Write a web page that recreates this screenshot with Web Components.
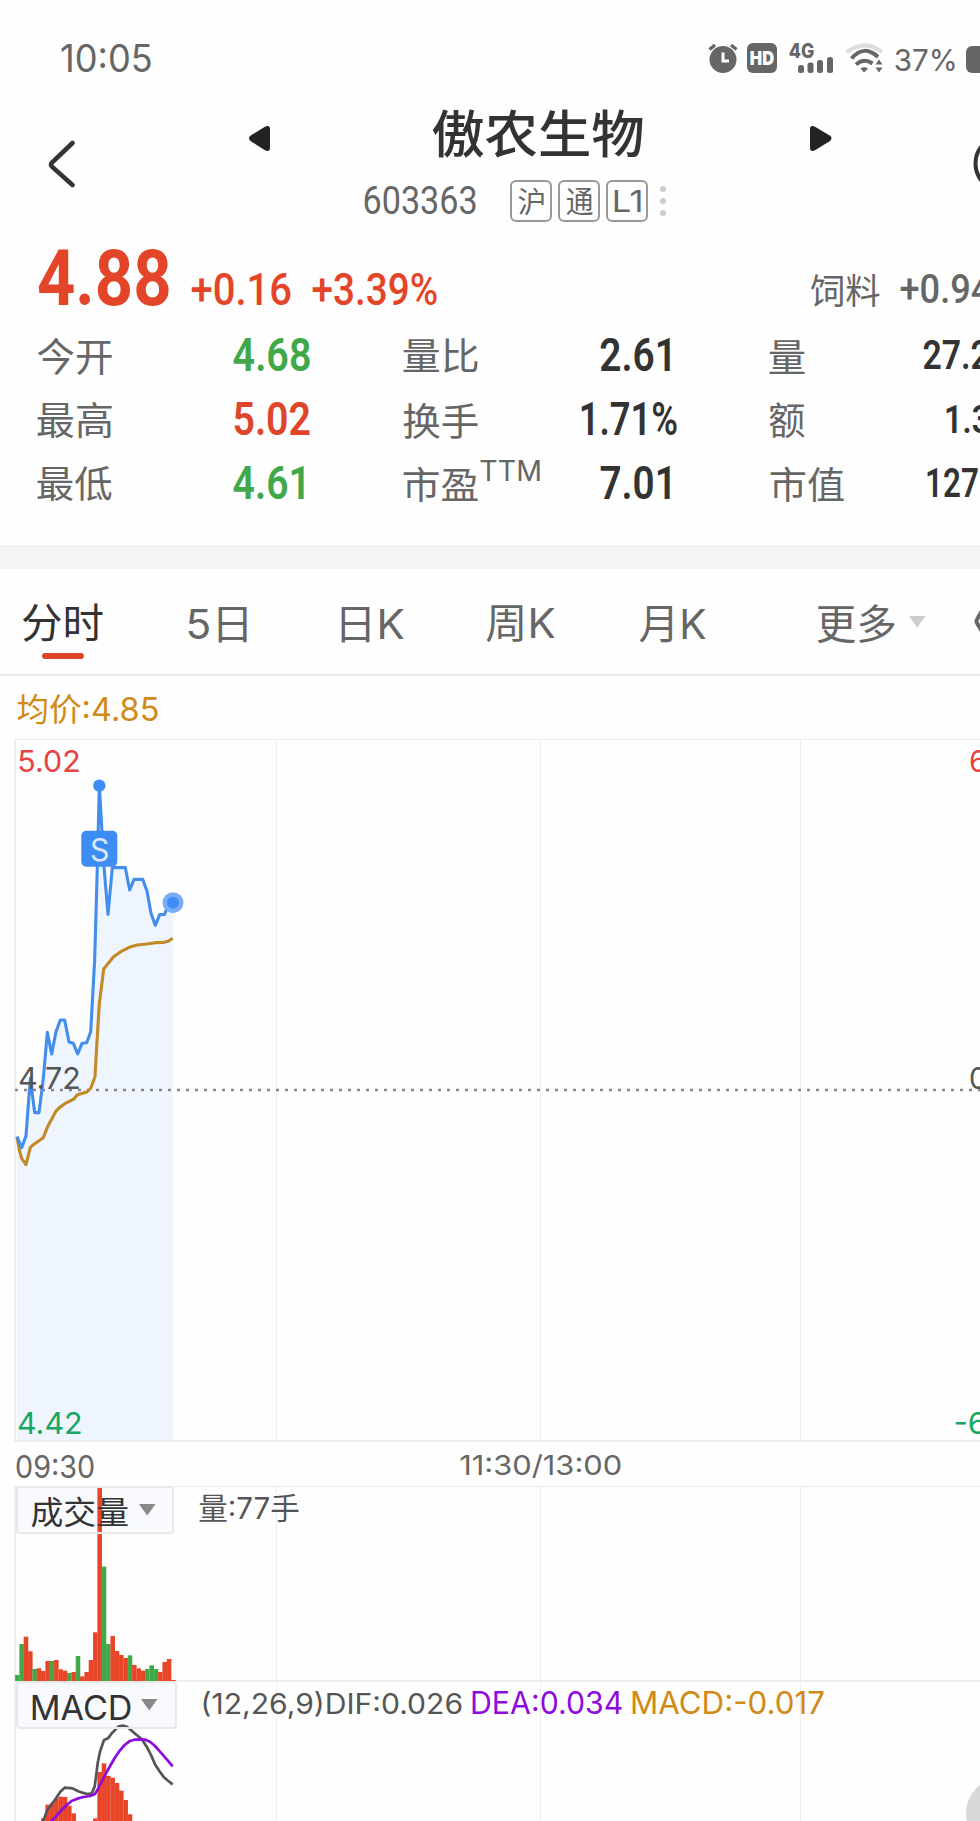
<!DOCTYPE html>
<html lang="zh-CN">
<head>
<meta charset="utf-8">
<title>傲农生物 603363</title>
<style>
html,body{margin:0;background:#fefefe}
body{width:980px;height:1821px;overflow:hidden}
</style>
</head>
<body>
<stock-app></stock-app>
<script>
const FONT = '"Inter","Noto Sans CJK SC",sans-serif';
const ctx = document.createElement('canvas').getContext('2d');
const define = (name, html, after) => customElements.define(name, class extends HTMLElement {
  connectedCallback() {
    if (this.shadowRoot) return;
    this.attachShadow({mode: 'open'}).innerHTML = html;
    if (after) after(this, this.shadowRoot);
  }
});

/* A text whose glyph box is w by h pixels, less half a pixel of antialiasing at each side. */
define('ink-text', `<style>
:host{display:block;flex:none;overflow:visible}
span{display:block;width:max-content;white-space:nowrap;line-height:1;transform-origin:0 0;font-feature-settings:"cv03","cv04"}
i{display:inline-block;width:0;height:0}
</style><span><slot></slot><i></i></span>`, (el, root) => {
  const w = +el.getAttribute('w'), h = +el.getAttribute('h'), weight = el.getAttribute('weight') || 400;
  const family = el.getAttribute('face') || FONT;
  ctx.font = `${weight} 200px ${family}`;
  const m = ctx.measureText(el.textContent);
  const size = 200 * h / (m.actualBoundingBoxAscent + m.actualBoundingBoxDescent);
  const k = size / 200;
  const sx = (w - 1) / ((m.actualBoundingBoxLeft + m.actualBoundingBoxRight) * k);
  el.style.width = w + 'px';
  el.style.height = h + 'px';
  const span = root.querySelector('span');
  span.style.font = `${weight} ${size}px/1 ${family}`;
  const base = root.querySelector('i').getBoundingClientRect().bottom - el.getBoundingClientRect().top;
  const ty = m.actualBoundingBoxAscent * k - base;
  span.style.transform = `translate(${m.actualBoundingBoxLeft * k * sx + .6}px,${ty}px) scaleX(${sx})`;
});

define('status-bar', `<style>
:host{display:flex;height:43px;padding:43px 0 0 61px;color:#666;align-items:flex-start}
svg{display:block;flex:none}
.hd{box-sizing:border-box;width:30px;height:30px;border-radius:6px;background:#666;color:#fff;padding:8px 3px;margin:0 12px 0 9px}
.net{width:44px;height:30px;margin-right:13px;display:grid}
.net>*{grid-area:1/1}
.bat{width:30px;height:27px;border-radius:6px;background:#666;margin:3px 0 0 11px;flex:none}
</style>
<ink-text w="90" h="28" style="margin:1px 557px 0 0">10:05</ink-text>
<svg width="30" height="30"><circle cx="15" cy="16.500" r="13.500" fill="#666"/><path d="M1.500 6.500 7 2M28.500 6.500 23 2" stroke="#666" stroke-width="3.500"/><path d="M15 9.500v8.500h6" stroke="#fff" stroke-width="3" fill="none"/></svg>
<div class="hd"><ink-text w="24" h="14" weight="900">HD</ink-text></div>
<div class="net"><ink-text w="25" h="15" weight="800">4G</ink-text>
<svg width="44" height="30" fill="#666"><rect x="9" y="22" width="6" height="8" rx="2.500"/><rect x="18.500" y="19.500" width="6" height="10.500" rx="2.500"/><rect x="28" y="17" width="6" height="13" rx="2.500"/><rect x="38" y="14" width="6" height="16" rx="2.500"/></svg></div>
<svg width="38" height="30" fill="none" stroke="#666" stroke-width="4"><path d="M.500 9.500Q18.500-4.500 36 9" stroke="#ddd"/><path d="M5.500 15.500Q18 1 32 14"/><path d="M10 21.500Q18 14.500 26.500 20.500"/><path d="M14.500 25.500Q18 23 22 25.500L18 29.500Z" fill="#666" stroke="none"/><path d="M29.500 21.500l3.500-5 3.500 5zM29.500 24.500l3.500 5 3.500-5z" fill="#666" stroke="none"/></svg>
<ink-text w="60" h="23" style="margin:5px 0 0 11px">37%</ink-text>
<div class="bat"></div>`);

define('market-tag', `<style>
:host{display:flex;box-sizing:border-box;width:42px;height:42px;border:2px solid #999;border-radius:6px;align-items:center;justify-content:center;flex:none}
</style><slot></slot>`);

define('stock-header', `<style>
:host{display:grid;grid-template-columns:249px 183px 211px 1fr 21px 149px;height:146px;color:#333;align-items:start}
svg{display:block}
.left{display:grid;grid-template-columns:47px 1fr;padding-top:53px}
.tri{margin-top:39px}
.name{margin-top:24px}
.sub{grid-column:2/5;grid-row:1;display:flex;margin:94px 0 0 115px;color:#666;gap:6px}
</style>
<div class="left" style="grid-column:1;grid-row:1"><span></span><svg width="30" height="52"><path d="M25.500 4 5 23.500Q3 25.700 5 27.700L25.500 46" fill="none" stroke="#333" stroke-width="4.500" stroke-linecap="round"/></svg></div>
<svg class="tri" style="grid-column:2;grid-row:1" width="22" height="28" fill="#222"><path d="M1 11 16 1.800Q21-.5 21 4.500V22.500Q21 27.500 16 25.200L1.500 16Q-1 13.500 1 11Z"/></svg>
<ink-text class="name" style="grid-column:3;grid-row:1" w="211" h="48" weight="500">傲农生物</ink-text>
<svg class="tri" style="grid-column:5;grid-row:1" width="22" height="28" fill="#222"><path d="M20.500 11 5 1.800Q0-.5 0 4.500V22.500Q0 27.500 5 25.200L20 16Q22.500 13.500 20.500 11Z"/></svg>
<svg style="grid-column:6;grid-row:1;margin:45px 0 0 135px" width="14" height="64"><circle cx="37" cy="32.500" r="27.500" fill="none" stroke="#333" stroke-width="4"/></svg>
<div class="sub"><ink-text w="112" h="28" style="margin:6px 28px 0 0" face="Roboto">603363</ink-text>
<market-tag><ink-text w="26" h="27">沪</ink-text></market-tag><market-tag><ink-text w="27" h="26">通</ink-text></market-tag><market-tag><ink-text w="27" h="22">L1</ink-text></market-tag>
<svg width="6" height="42" fill="#ccc" style="margin-left:6px"><circle cx="3" cy="9" r="3"/><circle cx="3" cy="21" r="3"/><circle cx="3" cy="33" r="3"/></svg></div>`);

define('price-line', `<style>
:host{display:flex;height:105px;padding:17px 0 0 38px;box-sizing:border-box;color:#e44427;align-items:flex-start}
.sector{display:flex;color:#666;margin:25px 0 0 373px;gap:20px}
</style>
<ink-text w="131" h="57" weight="700" face="Roboto">4.88</ink-text>
<ink-text w="100" h="33" weight="500" face="Roboto" style="margin:23px 0 0 22px">+0.16</ink-text>
<ink-text w="125" h="33" weight="500" face="Roboto" style="margin:23px 0 0 21px">+3.39%</ink-text>
<div class="sector"><ink-text w="70" h="33">饲料</ink-text><ink-text w="91" h="30" weight="500" face="Roboto" style="margin-top:-1px">+0.94</ink-text></div>`);

define('quote-grid', `<style>
:host{display:grid;grid-template-columns:196px 170px 178px 188px 154px 80px;grid-template-rows:64px 64px 80px;padding-left:37px;height:208px;align-items:start;color:#333}
.k{color:#666}.g{color:#40a848}.r{color:#e0442a}
.pe{display:flex}
</style>
<ink-text class="k" w="75" h="36" style="margin-top:1px">今开</ink-text><ink-text class="g" w="77" h="34" weight="600" face="Roboto">4.68</ink-text>
<ink-text class="k" w="75" h="34" style="margin-top:2px">量比</ink-text><ink-text w="70" h="34" weight="600" face="Roboto" style="margin-left:19px">2.61</ink-text>
<ink-text class="k" w="36" h="33" style="margin-top:3px">量</ink-text><ink-text w="66" h="29" weight="600" face="Roboto" style="margin-top:3px">27.2</ink-text>
<ink-text class="k" w="75" h="35" style="margin-top:1px">最高</ink-text><ink-text class="r" w="76" h="34" weight="600" face="Roboto" style="margin-left:1px">5.02</ink-text>
<ink-text class="k" w="75" h="35" style="margin-top:2px">换手</ink-text><ink-text w="96" h="34" weight="600" face="Roboto">1.71%</ink-text>
<ink-text class="k" w="36" h="35" style="margin-top:1px">额</ink-text><ink-text w="43" h="29" weight="600" face="Roboto" style="margin:3px 0 0 23px">1.3</ink-text>
<ink-text class="k" w="75" h="35" style="margin-top:1px">最低</ink-text><ink-text class="g" w="71" h="34" weight="600" face="Roboto">4.61</ink-text>
<div class="pe k"><ink-text w="75" h="35" style="margin-top:2px">市盈</ink-text><ink-text w="60" h="21" style="margin:-5px 0 0 2px">TTM</ink-text></div><ink-text w="70" h="34" weight="600" face="Roboto" style="margin-left:19px">7.01</ink-text>
<ink-text class="k" w="74" h="35" style="margin:2px 0 0 1px">市值</ink-text><ink-text w="51" h="29" weight="600" face="Roboto" style="margin:3px 0 0 4px">127</ink-text>`);

define('period-tabs', `<style>
:host{display:flex;box-sizing:border-box;height:131px;border-top:24px solid #f4f4f4;border-bottom:2px solid #eaeaea;padding:35px 0 0 22px;color:#666;align-items:flex-start}
.on{color:#333}.on b{display:block;width:42px;height:6px;border-radius:3px;background:#e04428;margin:11px 0 0 20px}
svg{display:block;flex:none}
</style>
<div class="on"><ink-text w="81" h="38">分时</ink-text><b></b></div>
<ink-text w="59" h="35" style="margin:3px 0 0 85px">5日</ink-text>
<ink-text w="63" h="35" style="margin:3px 0 0 94px">日K</ink-text>
<ink-text w="69" h="36" style="margin:2px 0 0 82px">周K</ink-text>
<ink-text w="67" h="36" style="margin:2px 0 0 84px">月K</ink-text>
<ink-text w="78" h="38" style="margin:0 0 0 111px">更多</ink-text>
<svg width="17" height="12" fill="#ccc" style="margin:12px 0 0 14px"><path d="M0 0h16.500L8.200 11.500z"/></svg>
<svg width="8" height="28" style="margin:3px 0 0 47px" fill="none" stroke="#666" stroke-width="4"><path d="M10 2 4 12.500Q3 14 4 16L10 26"/></svg>`);

define('indicator-picker', `<style>
:host{display:flex;box-sizing:border-box;height:48px;border:2px solid #e9e9ea;border-radius:4px;color:#333;align-items:flex-start;flex:none}
svg{display:block;flex:none}
</style><slot></slot><svg width="17" height="12" fill="#888"><path d="M0 0h16.500L8.200 11.500z"/></svg>`, (el, root) => {
  root.querySelector('svg').style.margin = el.getAttribute('arrow');
});

define('chart-canvas', `<style>:host{display:block}svg{display:block}</style><svg width="980" height="1145" viewBox="0 676 980 1145"></svg>`, (el, root) => {
  /* Series are kept at three units per pixel. */
  const pts = (s, dy) => s.trim().split(/\s+/).map(p => { const [x, y] = p.split(',').map(Number); return [x / 3, y / 3 + dy]; });
  const path = a => 'M' + a.map(p => p[0].toFixed(2) + ' ' + p[1].toFixed(2)).join('L');
  const price = [...pts('51,500 65,533 78,497 91,325 104,428 117,428 130,325 142,187 155,252 168,185 181,150 194,150 207,216 220,220 233,252 246,220 260,218 272,185', 970),
    ...pts('284,600 292,320 298,77 312,320 324,463 337,323 376,323 389,390 402,358 428,358 441,393 453,460 466,496 479,464 494,463 505,432 518,428', 760)];
  const avg = [...pts('51,500 58,540 65,565 78,584 91,532 104,521 130,503 142,472 168,423 181,411 194,401 220,388 233,374 260,366 272,355 285,320 290,230 298,100', 970),
    ...pts('307,660 311,627 325,610 340,591 362,575 388,562 412,555 440,552 466,548 492,547 505,544 518,535', 760)];
  const dif = pts('128,460 130,453 142,420 155,403 168,385 181,365 194,353 218,355 233,363 247,368 262,372 275,370 284,350 288,320 293,280 300,245 312,210 324,205 335,190 350,175 357,169 370,167 380,170 395,182 410,195 425,207 440,230 453,255 465,283 478,303 492,322 505,333 518,343', 1670);
  const dea = pts('150,458 170,437 185,420 200,405 215,393 232,386 250,381 270,378 284,373 294,357 305,335 318,310 332,285 346,261 360,241 374,225 388,214 403,209 420,208 436,209 450,215 465,228 480,245 495,262 508,277 518,289', 1670);
  const vol = 'g825 g732 r710 r754 g807 r805 r813 r783 g783 r780 r808 r812 g819 r816 g768 r829 r816 r780 r697 r264 g500 g732 r708 r753 r765 r774 g766 r795 r805 r812 g807 g796 g807 r816 r786 r777 r840'.split(' ');
  const macd = [[123,445],[136,404],[149,400],[162,385],[175,380],[188,381],[201,407],[214,430],[279,445],[292,306],[305,280],[318,318],[331,323],[344,339],[357,362],[370,390],[383,433]];
  const bar = (x, top, bottom, c) => `<rect x="${x}" y="${top}" width="4.6" height="${bottom - top}" fill="${c}"/><rect x="${x}" y="${top}" width=".6" height="${bottom - top}" fill="#fff" opacity=".12"/>`;
  let s = `<path d="${path(price)}L172.700 1440.500H17Z" fill="#eef5fe"/>
  <g fill="#eee"><rect x="14" y="739" width="966" height="1"/><rect x="14" y="739" width="2" height="703"/><rect x="14" y="1440" width="966" height="2"/>
  <rect x="14" y="1486" width="966" height="1"/><rect x="14" y="1486" width="2" height="335"/><rect x="14" y="1680" width="966" height="2"/>`;
  for (const x of [276, 540, 800]) s += `<rect x="${x}" y="740" width="1" height="701"/><rect x="${x}" y="1486" width="1" height="335"/>`;
  s += `</g><rect x="16" y="1487" width="158" height="47" rx="3" fill="#f9fafe"/><rect x="16" y="1682" width="161" height="47" rx="3" fill="#f9fafe"/>`;
  vol.forEach((v, i) => s += bar(15 + i * 4.335, 1400 + v.slice(1) / 3, 1681, v[0] == 'g' ? '#40a848' : '#e84427'));
  macd.forEach(([x, y]) => s += bar(x / 3, 1670 + y / 3, 1821, '#e84427'));
  s += `<path d="M15 1090H980" stroke="#888" stroke-width="2.600" stroke-dasharray="3 6"/>
  <g fill="none" stroke-width="3.100" stroke-linejoin="round"><path d="${path(avg)}" stroke="#c48a27"/><path d="${path(price)}" stroke="#438eea"/>
  <path d="${path(dif)}" stroke="#555" stroke-width="2.700"/><path d="${path(dea)}" stroke="#8d0bdc" stroke-width="2.700"/></g>
  <circle cx="99.300" cy="785.700" r="6.200" fill="#3d8df5"/><rect x="81.300" y="830.700" width="36" height="36" rx="5" fill="#3d8df5"/>
  <circle cx="173" cy="902.700" r="10.500" fill="#7badf5"/><circle cx="173" cy="902.700" r="6" fill="#3d8df5"/>
  <circle cx="1001" cy="1813" r="35" fill="#d8d8d8"/>`;
  root.querySelector('svg').innerHTML = s;
});

define('chart-panel', `<style>
:host{display:grid;height:1145px}
:host>*{grid-area:1/1}
.over{display:flex;flex-direction:column;position:relative;width:980px;align-items:flex-start}
.row{display:flex;width:980px;box-sizing:border-box;align-items:flex-start}
.red{color:#e54343}.green{color:#17a760}.grey{color:#555}
</style>
<chart-canvas></chart-canvas>
<div class="over">
<ink-text w="141" h="30" style="margin:18px 0 0 17px;color:#d08a16">均价:4.85</ink-text>
<div class="row red" style="margin-top:26px;padding-left:19px;gap:891px;height:88px"><ink-text w="60" h="22">5.02</ink-text><ink-text w="16" h="22">6</ink-text></div>
<ink-text w="17" h="23" style="margin-left:91px;color:#dbe7fa">S</ink-text>
<div class="row grey" style="margin-top:206px;padding-left:19px;gap:891px;height:345px"><ink-text w="60" h="22">4.72</ink-text><ink-text w="16" h="22">0</ink-text></div>
<div class="row green" style="padding-left:18px;gap:874px;height:43px"><ink-text w="63" h="22">4.42</ink-text><ink-text w="31" h="22">-6</ink-text></div>
<div class="row" style="padding-left:16px;gap:366px;color:#666;height:31px"><ink-text w="78" h="23">09:30</ink-text><ink-text w="161" h="24" style="margin-top:-1px">11:30/13:00</ink-text></div>
<div class="row" style="padding-left:16px;height:195px;gap:25px;color:#555"><indicator-picker style="width:158px" arrow="16px 0 0 11px"><ink-text w="97" h="30" style="margin:9px 0 0 13px">成交量</ink-text></indicator-picker><ink-text w="100" h="27" style="margin-top:8px">量:77手</ink-text></div>
<div class="row" style="padding-left:16px;color:#555"><indicator-picker style="width:161px" arrow="16px 0 0 10px"><ink-text w="99" h="25" style="margin:12px 0 0 14px">MACD</ink-text></indicator-picker>
<ink-text w="259" h="28" style="margin:10px 0 0 26px">(12,26,9)DIF:0.026</ink-text><ink-text w="150" h="23" style="margin:10px 0 0 10px;color:#8d0bdc">DEA:0.034</ink-text><ink-text w="192" h="23" style="margin:10px 0 0 10px;color:#d08a16">MACD:-0.017</ink-text></div>
</div>`);

define('stock-app', `<style>
:host{display:block;width:980px;height:1821px;overflow:hidden;font-family:${FONT};background:#fefefe}
</style>
<status-bar></status-bar><stock-header></stock-header><price-line></price-line><quote-grid></quote-grid><period-tabs></period-tabs><chart-panel></chart-panel>`);
</script>
</body>
</html>
